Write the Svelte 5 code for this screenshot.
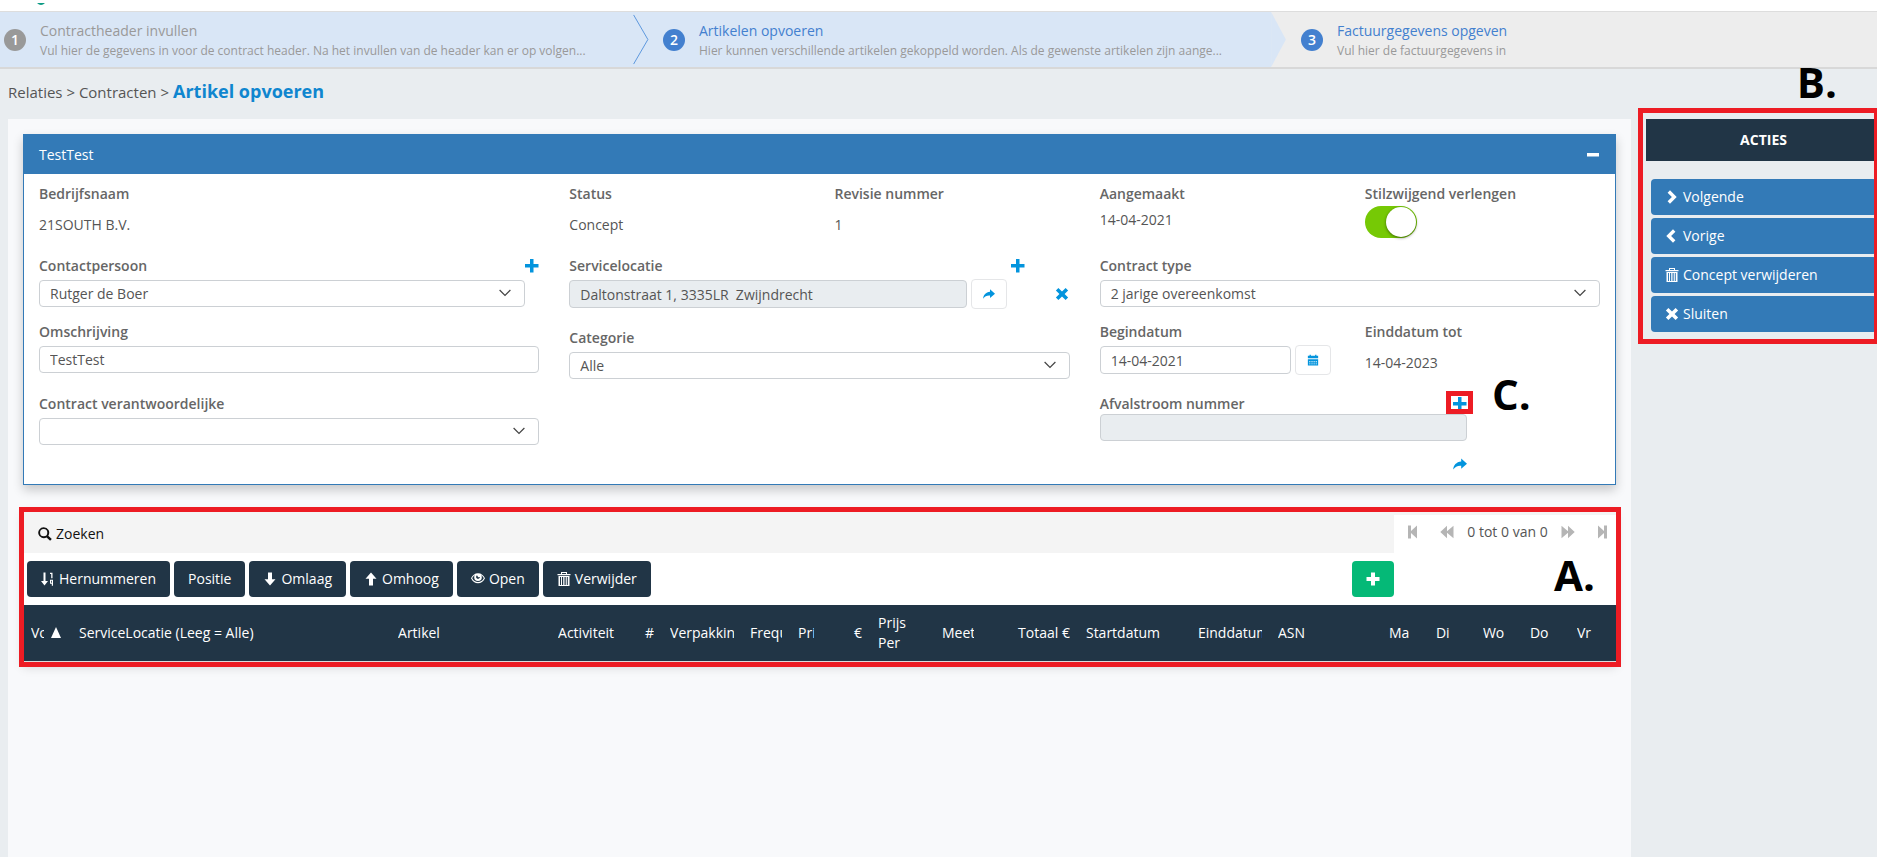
<script>
  const steps = [
    { nr: 1, title: 'Contractheader invullen', text: 'Vul hier de gegevens in voor de contract header. Na het invullen van de header kan er op volgen...', state: 'done' },
    { nr: 2, title: 'Artikelen opvoeren', text: 'Hier kunnen verschillende artikelen gekoppeld worden. Als de gewenste artikelen zijn aange...', state: 'active' },
    { nr: 3, title: 'Factuurgegevens opgeven', text: 'Vul hier de factuurgegevens in', state: 'next' }
  ];

  const actions = [
    { icon: 'right', label: 'Volgende' },
    { icon: 'left', label: 'Vorige' },
    { icon: 'trash', label: 'Concept verwijderen' },
    { icon: 'cross', label: 'Sluiten' }
  ];

  const tools = [
    { icon: 'sort', label: 'Hernummeren' },
    { icon: null, label: 'Positie' },
    { icon: 'down', label: 'Omlaag' },
    { icon: 'up', label: 'Omhoog' },
    { icon: 'eye', label: 'Open' },
    { icon: 'trash', label: 'Verwijder' }
  ];

  // Relative column widths of the article grid
  const columns = [
    { label: 'Vo', w: 48, sorted: true },
    { label: 'ServiceLocatie (Leeg = Alle)', w: 319 },
    { label: 'Artikel', w: 160 },
    { label: 'Activiteit', w: 80 },
    { label: '#', w: 32, right: true },
    { label: 'Verpakkin', w: 80 },
    { label: 'Frequ', w: 48 },
    { label: 'Pri', w: 32 },
    { label: '€', w: 48, right: true },
    { label: 'Prijs Per', w: 64, wrap: true },
    { label: 'Meet', w: 48 },
    { label: 'Totaal €', w: 96, right: true },
    { label: 'Startdatum', w: 112 },
    { label: 'Einddatum', w: 80 },
    { label: 'ASN', w: 111 },
    { label: 'Ma', w: 47 },
    { label: 'Di', w: 47 },
    { label: 'Wo', w: 47 },
    { label: 'Do', w: 47 },
    { label: 'Vr', w: 47 }
  ];
  const total = columns.reduce((sum, c) => sum + c.w, 0);
</script>

{#snippet icon(name)}
  <svg class="icon" viewBox="0 0 14 14" width="14" height="14" aria-hidden="true" fill="currentColor">
    {#if name === 'plus'}
      <path d="M5 .5h4V5h4.5v4H9v4.5H5V9H.5V5H5z" />
    {:else if name === 'bluePlus'}
      <path d="M5 0h3.500v5h5v3.500h-5v5H5v-5H0V5h5z" />
    {:else if name === 'cross'}
      <path d="M3.4.9 7 4.4 10.6.9l2.5 2.5L9.6 7l3.5 3.6-2.5 2.5L7 9.6l-3.6 3.5L.9 10.6 4.4 7 .9 3.4z" />
    {:else if name === 'share'}
      <path d="M8.2 1.5 14 6.7l-5.8 5V8.8C4.700 8.500 2.100 9.700.2 12.600.500 8.300 3.200 5 8.200 4.500z" />
    {:else if name === 'right'}
      <path d="M2.600 2.700 5 .3 11.700 7 5 13.700 2.600 11.300 6.900 7z" />
    {:else if name === 'left'}
      <path d="M10.400 2.700 8 .3 1.300 7 8 13.700l2.400-2.400L6.100 7z" />
    {:else if name === 'trash'}
      <path d="M4 0h6v2h3.500v1.200H.5V2H4zM5 1v1h4V1z" fill-rule="evenodd" />
      <path d="M1.500 4h11v1h-11zM1.500 13h11v1h-11zM1.500 4H3v10H1.500zM11 4h1.500v10H11zM4 5h1v8H4zM6 5h.800v8H6zM7.500 5h.800v8h-.8zM9.200 5h1v8h-1z" />
    {:else if name === 'down'}
      <path d="M5 .5h4v6.800h3.500L7 13.500 1.500 7.300H5z" />
    {:else if name === 'up'}
      <path d="M5 13.500h4V6.700h3.500L7 .5 1.500 6.700H5z" />
    {:else if name === 'eye'}
      <path fill-rule="evenodd" d="M7 1.300c3.200 0 5.600 2 7 5-1.600 3.300-4 5-7 5s-5.400-1.700-7-5c1.400-3 3.800-5 7-5zM3.900 3C2.600 3.800 1.800 5 1.200 6.300 2.500 8.800 4.500 10 7 10s4.500-1.200 5.800-3.700C12.200 5 11.400 3.800 10.100 3c.5.600.7 1.400.7 2.200a3.800 3.800 0 0 1-7.600 0c0-.8.2-1.600.7-2.200zM6 3.200a2 2 0 0 0-.9 1.700c0 1 .8 1.800 1.900 1.800s1.900-.8 1.900-1.800L7.200 5.200z" />
    {:else if name === 'sort'}
      <path d="M2.500.5h2V9H7l-3.500 4.500L0 9h2.500z" />
      <path d="M9 .8h2.500v5.500h-1.300V2H9zM9 7.800h3v6h-1.200v-2H9zm1.100 1v2h.8v-2z" fill-rule="evenodd" />
    {:else if name === 'search'}
      <path fill-rule="evenodd" d="M5.700.2a5.500 5.500 0 0 1 4.600 8.500l3.500 3.400-1.700 1.700-3.500-3.400A5.500 5.500 0 1 1 5.700.2zm0 1.900a3.600 3.600 0 1 0 0 7.200 3.600 3.600 0 0 0 0-7.200z" />
    {:else if name === 'calendar'}
      <path fill-rule="evenodd" d="M1 2h2V1h1.500v1h5V1H11v1h2v3H1zM1 6h12v7.500H1zm1.500 2.500v1H4v-1zm2.600 0v1h1.500v-1zm2.500 0v1h1.500v-1zm2.500 0v1h1.500v-1zM2.500 11v1H4v-1zm2.600 0v1h1.500v-1zm2.500 0v1h1.500v-1zm2.500 0v1h1.500v-1z" />
    {:else if name === 'minus'}
      <path d="M1 5h12v3.500H1z" />
    {:else if name === 'first'}
      <path d="M2 .5h3v5.600L11 .5v13L5 7.900v5.600H2z" />
    {:else if name === 'last'}
      <path d="M12 .5H9v5.600L3 .5v13l6-5.600v5.600h3z" />
    {:else if name === 'rewind'}
      <path d="M7 .8v5.400L13.500.8v12.400L7 7.800v5.400L.3 7z" />
    {:else if name === 'forward'}
      <path d="M7 .8v5.400L.5.8v12.400L7 7.800v5.400L13.700 7z" />
    {/if}
  </svg>
{/snippet}

{#snippet chevron()}
  <svg class="chevron" viewBox="0 0 12 8" width="12" height="8" aria-hidden="true">
    <path d="M.6 1 6 6.500 11.400 1" fill="none" stroke="#444" stroke-width="1.200" />
  </svg>
{/snippet}

<div class="page">
  <div class="top"><svg width="8" height="2" viewBox="0 0 8 2" aria-hidden="true"><path d="M0 0h8Q6 2 4 2T0 0z" fill="#0b9a83" /></svg></div>

  <nav class="wizard" aria-label="Stappen">
    {#each steps as s}
      <a class="step {s.state}" href="#stap-{s.nr}">
        <span class="badge">{s.nr}</span>
        <span class="step-text">
          <span class="step-title">{s.title}</span>
          <span class="step-desc">{s.text}</span>
        </span>
        {#if s.state === 'done'}
          <svg class="arrow" viewBox="0 0 16 56" width="16" height="56" aria-hidden="true"><path d="M.5 3 15 28 .5 53" fill="none" stroke="#5b96dc" /></svg>
        {:else if s.state === 'active'}
          <svg class="arrow" viewBox="0 0 16 56" width="16" height="56" aria-hidden="true"><path d="M0 0 15 28 0 56z" fill="#d9e6f6" /></svg>
        {/if}
      </a>
    {/each}
  </nav>

  <div class="crumbs"><span>Relaties &gt; Contracten &gt;</span> <h1>Artikel opvoeren</h1></div>

  <div class="layout">
    <main>
      <section class="card">
        <header class="card-head">
          <span>TestTest</span>
          <button class="plain" aria-label="Inklappen">{@render icon('minus')}</button>
        </header>
        <div class="form">
          <div class="col">
            <div class="field tall">
              <span class="label">Bedrijfsnaam</span>
              <span class="value">21SOUTH B.V.</span>
            </div>
            <div class="field">
              <div class="label-row">
                <label for="contact">Contactpersoon</label>
                <button class="plain" aria-label="Contactpersoon toevoegen">{@render icon('bluePlus')}</button>
              </div>
              <div class="select short">
                <select id="contact"><option>Rutger de Boer</option></select>{@render chevron()}
              </div>
            </div>
            <div class="field tall">
              <label for="omschrijving">Omschrijving</label>
              <input id="omschrijving" type="text" value="TestTest" />
            </div>
            <div class="field">
              <label for="verantw">Contract verantwoordelijke</label>
              <div class="select">
                <select id="verantw"><option></option></select>{@render chevron()}
              </div>
            </div>
          </div>

          <div class="col">
            <div class="pair">
              <div class="field tall">
                <span class="label">Status</span>
                <span class="value">Concept</span>
              </div>
              <div class="field tall">
                <span class="label">Revisie nummer</span>
                <span class="value">1</span>
              </div>
            </div>
            <div class="field tall">
              <div class="label-row inset">
                <label for="locatie">Servicelocatie</label>
                <button class="plain" aria-label="Servicelocatie toevoegen">{@render icon('bluePlus')}</button>
              </div>
              <div class="group">
                <input id="locatie" type="text" readonly value="Daltonstraat 1, 3335LR  Zwijndrecht" />
                <button class="square small" aria-label="Naar servicelocatie">{@render icon('share')}</button>
                <button class="plain clear" aria-label="Servicelocatie wissen">{@render icon('cross')}</button>
              </div>
            </div>
            <div class="field">
              <label for="categorie">Categorie</label>
              <div class="select">
                <select id="categorie"><option>Alle</option></select>{@render chevron()}
              </div>
            </div>
          </div>

          <div class="col">
            <div class="pair">
              <div class="field tall">
                <span class="label">Aangemaakt</span>
                <span class="value near">14-04-2021</span>
              </div>
              <div class="field tall">
                <label for="verlengen">Stilzwijgend verlengen</label>
                <input id="verlengen" class="toggle" type="checkbox" role="switch" checked />
              </div>
            </div>
            <div class="field">
              <label for="type">Contract type</label>
              <div class="select">
                <select id="type"><option>2 jarige overeenkomst</option></select>{@render chevron()}
              </div>
            </div>
            <div class="pair">
              <div class="field tall">
                <label for="begin">Begindatum</label>
                <div class="group date">
                  <input id="begin" type="text" value="14-04-2021" />
                  <button class="square small" aria-label="Kalender">{@render icon('calendar')}</button>
                </div>
              </div>
              <div class="field tall">
                <span class="label">Einddatum tot</span>
                <span class="value">14-04-2023</span>
              </div>
            </div>
            <div class="field waste">
              <div class="label-row">
                <label for="afval">Afvalstroom nummer</label>
                <button class="plain" aria-label="Afvalstroom nummer toevoegen">{@render icon('bluePlus')}</button>
              </div>
              <input id="afval" type="text" readonly value="" />
              <button class="plain goto" aria-label="Naar afvalstroom">{@render icon('share')}</button>
              <span class="mark mark-c"></span>
              <span class="letter letter-c">C.</span>
            </div>
          </div>
        </div>
      </section>

      <section class="articles">
        <div class="search-row">
          <button class="search">{@render icon('search')}Zoeken</button>
          <div class="pager">
            <button class="plain" aria-label="Eerste pagina">{@render icon('first')}</button>
            <button class="plain" aria-label="Vorige pagina">{@render icon('rewind')}</button>
            <span>0 tot 0 van 0</span>
            <button class="plain" aria-label="Volgende pagina">{@render icon('forward')}</button>
            <button class="plain" aria-label="Laatste pagina">{@render icon('last')}</button>
          </div>
        </div>
        <div class="toolbar">
          {#each tools as t}
            <button class="btn dark">{#if t.icon}{@render icon(t.icon)}{/if}{t.label}</button>
          {/each}
          <button class="btn add" aria-label="Artikel toevoegen">{@render icon('plus')}</button>
        </div>
        <table>
          <colgroup>
            {#each columns as c}<col style="width: {(c.w / total) * 100}%" />{/each}
          </colgroup>
          <thead>
            <tr>
              {#each columns as c}
                <th class:right={c.right} class:sorted={c.sorted} class:wrap={c.wrap} scope="col" aria-sort={c.sorted ? 'ascending' : null}>
                  <div class="th-inner"><span>{c.label}</span>{#if c.sorted}<svg width="10" height="11" viewBox="0 0 10 11" aria-hidden="true"><path d="M5 0l5 11H0z" fill="#fff" /></svg>{/if}</div>
                </th>
              {/each}
            </tr>
          </thead>
        </table>
        <span class="mark mark-a"></span>
        <span class="letter letter-a">A.</span>
      </section>
    </main>

    <aside>
      <h2>ACTIES</h2>
      <div class="actions">
        {#each actions as a}
          <button class="btn blue">{@render icon(a.icon)}{a.label}</button>
        {/each}
      </div>
      <span class="mark mark-b"></span>
      <span class="letter letter-b">B.</span>
    </aside>
  </div>
</div>

<style>
  :global(body) {
    background: #e9edf0;
    overflow: hidden;
  }
  .page {
    box-sizing: border-box;
    min-height: 100vh;
    display: flex;
    flex-direction: column;
    overflow: hidden;
    font-family: 'Open Sans', 'Noto Sans', sans-serif;
    font-size: 14px;
    line-height: 20px;
    color: #555;
  }
  .page :is(*, *::before, *::after) {
    box-sizing: border-box;
  }
  button, input, select {
    font: inherit;
    color: inherit;
    margin: 0;
  }
  button {
    cursor: pointer;
  }
  .icon {
    display: block;
    flex: none;
  }
  .top {
    height: 11px;
    padding-left: 37px;
    background: #fff;
    line-height: 0;
  }

  /* wizard */
  .wizard {
    display: grid;
    grid-template-columns: 633fr 638fr 606fr;
    border-top: 1px solid #ddd;
    border-bottom: 2px solid #d8d8d8;
    background: #ededed;
  }
  .step {
    position: relative;
    display: flex;
    align-items: center;
    gap: 14px;
    height: 55px;
    padding: 0 30px;
    color: #4380cf;
    text-decoration: none;
  }
  .done, .active {
    background: #d9e6f6;
  }
  .done {
    padding-left: 4px;
    color: #999;
  }
  .badge {
    flex: none;
    width: 22px;
    height: 22px;
    border-radius: 50%;
    background: #4380cf;
    color: #fff;
    text-align: center;
    line-height: 22px;
    font-weight: 600;
  }
  .done .badge {
    background: #999;
  }
  .step-text {
    display: flex;
    flex-direction: column;
    padding-top: 2px;
    white-space: nowrap;
  }
  .step-desc {
    font-size: 12px;
    line-height: 20px;
    color: #999;
  }
  .arrow {
    position: absolute;
    z-index: 1;
    top: 0;
    left: 100%;
    height: 100%;
  }

  .crumbs {
    display: flex;
    align-items: baseline;
    gap: 4px;
    height: 50px;
    padding: 12px 8px 0;
    font-size: 15px;
  }
  h1 {
    margin: 0;
    font-size: 18px;
    line-height: 20px;
    font-weight: 700;
    color: #0f86cf;
  }

  .layout {
    flex: 1;
    display: grid;
    grid-template-columns: minmax(0, 1fr) 231px;
    gap: 15px;
    padding-left: 8px;
  }
  main {
    padding: 15px;
    background: #f8f9fb;
  }

  /* contract card */
  .card {
    border: 1px solid #337ab7;
    background: #fff;
    box-shadow: 0 5px 10px rgba(0, 0, 0, 0.2);
  }
  .card-head {
    display: flex;
    align-items: center;
    justify-content: space-between;
    height: 39px;
    padding: 0 15px;
    background: #337ab7;
    color: #fff;
  }
  .card-head .plain {
    color: #fff;
  }
  .form {
    display: grid;
    grid-template-columns: repeat(3, minmax(0, 1fr));
    gap: 30px;
    padding: 10px 15px;
  }
  .pair {
    display: grid;
    grid-template-columns: repeat(2, minmax(0, 1fr));
    column-gap: 30px;
  }
  .field {
    display: flex;
    flex-direction: column;
    align-items: stretch;
    min-height: 66px;
  }
  .tall {
    min-height: 72px;
  }
  .label, label {
    display: block;
    margin-bottom: 4px;
    font-weight: 600;
    color: #666;
  }
  .value {
    margin-top: 7px;
  }
  .near {
    margin-top: 2px;
  }
  .label-row {
    display: flex;
    justify-content: space-between;
    align-items: flex-start;
  }
  .label-row .plain {
    padding-top: 3px;
  }
  .inset {
    padding-right: 45px;
  }
  .plain {
    display: block;
    padding: 0;
    border: 0;
    background: none;
    color: #0394dd;
  }
  input[type='text'], select {
    display: block;
    width: 100%;
    height: 27px;
    padding: 0 10px;
    border: 1px solid #ccd0d4;
    border-radius: 4px;
    background: #fff;
    outline: 0;
  }
  input[readonly] {
    background: #e9edf0;
  }
  .select {
    position: relative;
  }
  select {
    appearance: none;
  }
  .short {
    margin-right: 14px;
  }
  .chevron {
    position: absolute;
    top: 9px;
    right: 14px;
    pointer-events: none;
  }
  .group {
    display: flex;
    align-items: center;
    gap: 4px;
  }
  .group input[type='text'] {
    flex: 1;
    min-width: 0;
    height: 28px;
  }
  .date {
    margin-right: 4px;
  }
  .square {
    display: flex;
    align-items: center;
    justify-content: center;
    width: 36px;
    height: 30px;
    margin: -1px 0;
    padding: 0;
    border: 1px solid #e5e6e8;
    border-radius: 4px;
    background: #fff;
    color: #0394dd;
  }
  .small .icon {
    width: 12px;
    height: 12px;
  }
  .clear {
    margin: 0 1px 0 44px;
  }
  .toggle {
    appearance: none;
    display: flex;
    justify-content: flex-end;
    width: 52px;
    height: 32px;
    margin-top: -2px;
    padding: 1px;
    border-radius: 16px;
    background: #76c905;
  }
  .toggle::before {
    content: '';
    width: 30px;
    height: 30px;
    border-radius: 50%;
    background: #fff;
    box-shadow: 0 1px 3px rgba(0, 0, 0, 0.5);
  }
  .waste {
    position: relative;
    margin-right: 133px;
  }
  .waste label {
    margin-bottom: 0;
  }
  .goto {
    align-self: flex-end;
    padding: 16px 0 3px;
  }

  /* articles */
  .articles {
    position: relative;
    margin-top: 24px;
    background: #fff;
    box-shadow: 0 5px 10px rgba(0, 0, 0, 0.15);
  }
  .search-row {
    display: flex;
    padding-top: 6px;
    background: #f4f4f4;
  }
  .search {
    flex: 1;
    display: flex;
    align-items: center;
    gap: 4px;
    padding: 0 15px;
    border: 0;
    background: none;
    color: #111;
  }
  .pager {
    display: flex;
    align-items: center;
    justify-content: space-between;
    width: 222px;
    height: 38px;
    padding: 0 7px 4px 12px;
    background: #fff;
  }
  .pager .plain {
    color: #b5b5b5;
  }
  .pager .plain:nth-child(2) {
    margin-left: 6px;
  }
  .pager .plain:nth-child(4) {
    margin-right: 6px;
  }
  .toolbar {
    display: flex;
    gap: 4px;
    padding: 8px 222px 8px 4px;
  }
  .btn {
    display: flex;
    align-items: center;
    gap: 4px;
    height: 36px;
    padding: 0 14px;
    border: 0;
    border-radius: 4px;
    color: #fff;
    white-space: nowrap;
  }
  .dark {
    background: #213546;
  }
  .add {
    margin-left: auto;
    background: #05b977;
  }
  table {
    width: 100%;
    table-layout: fixed;
    border-collapse: collapse;
    background: #213546;
    border-bottom: 1px solid #ddd;
  }
  th {
    height: 56px;
    padding: 0 8px;
    color: #fff;
    font-weight: 400;
    text-align: left;
    white-space: nowrap;
  }
  .th-inner {
    overflow: hidden;
  }
  .right {
    text-align: right;
  }
  .wrap {
    white-space: normal;
    padding-right: 20px;
  }
  .sorted .th-inner {
    display: flex;
    align-items: center;
    gap: 7px;
  }
  .sorted span {
    width: 13px;
    overflow: hidden;
  }
  .sorted svg {
    flex: none;
  }

  /* actions */
  aside {
    position: relative;
  }
  h2 {
    margin: 0;
    padding: 8px 0 8px 4px;
    background: #213546;
    color: #fff;
    font-size: 14px;
    line-height: 26px;
    font-weight: 700;
    text-align: center;
  }
  .actions {
    display: grid;
    gap: 3px;
    padding: 18px 0 0 5px;
  }
  .blue {
    padding-left: 14px;
    background: #337ab7;
  }

  /* callouts drawn over the form */
  .mark {
    position: absolute;
    z-index: 2;
    border: 5px solid #ed1c24;
    pointer-events: none;
  }
  .mark-a {
    inset: -2px -5px -5px -4px;
  }
  .mark-b {
    top: -11px;
    left: -8px;
    right: -2px;
    height: 236px;
  }
  .mark-c {
    top: -3px;
    right: -6px;
    width: 27px;
    height: 23px;
  }
  .letter {
    position: absolute;
    z-index: 2;
    color: #000;
    font-family: 'Open Sans', 'Noto Sans', sans-serif;
    font-size: 42px;
    line-height: 50px;
    font-weight: 700;
    pointer-events: none;
  }
  .letter-a {
    top: 41px;
    right: 21px;
  }
  .letter-b {
    top: -62px;
    right: 40px;
  }
  .letter-c {
    top: -25px;
    left: calc(100% + 25px);
  }
</style>
